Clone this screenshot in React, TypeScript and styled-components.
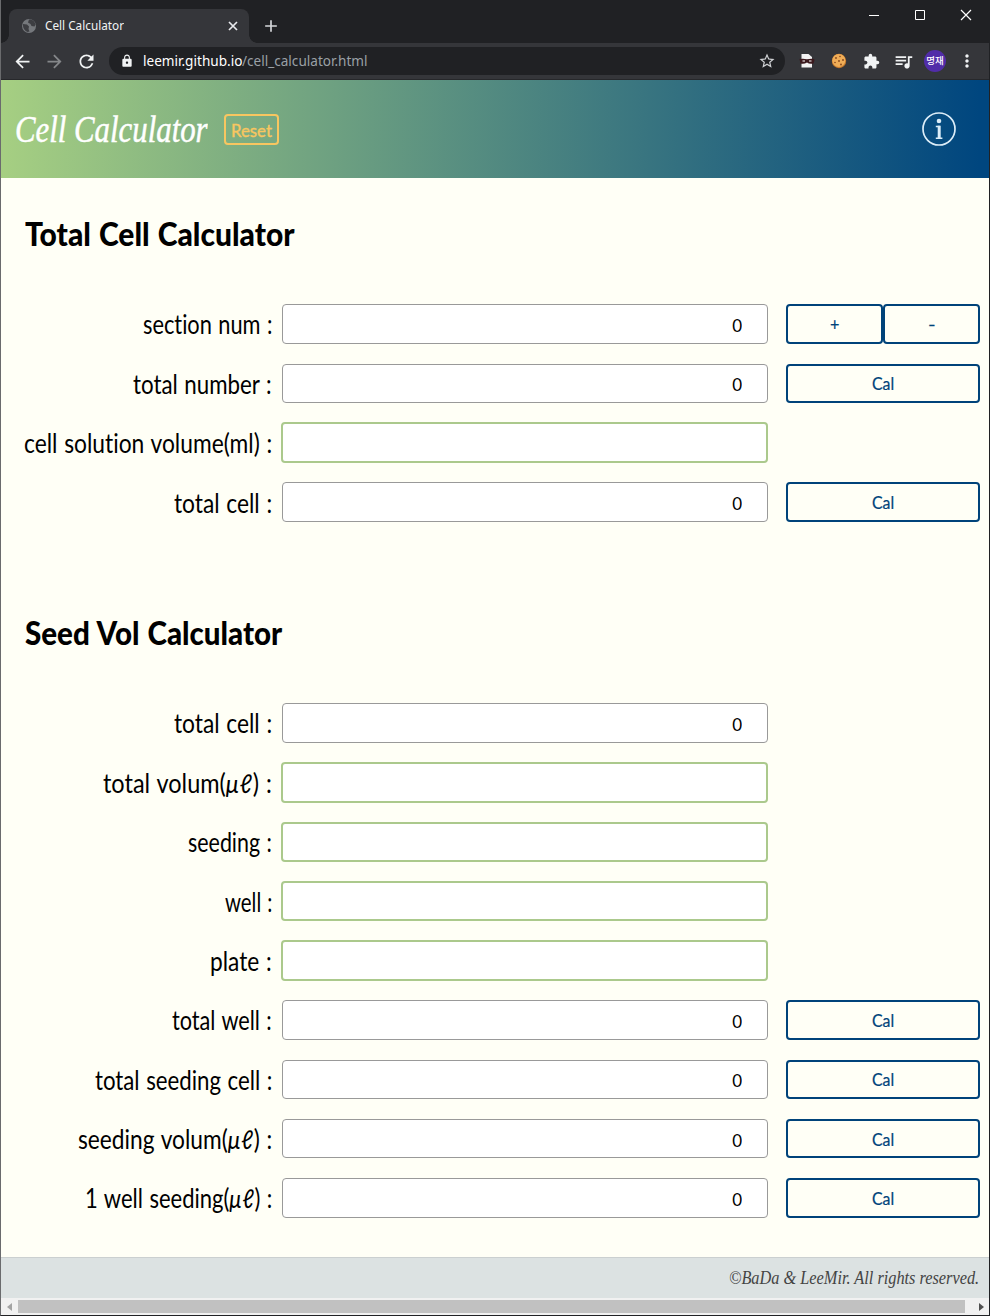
import React, { useLayoutEffect, useRef, useState } from 'react';
import styled, { createGlobalStyle } from 'styled-components';
import {
  MdArrowBack, MdArrowForward, MdRefresh, MdLock, MdStarBorder,
  MdExtension, MdQueueMusic, MdMoreVert, MdAdd,
} from 'react-icons/md';

const GlobalStyle = createGlobalStyle`
  * { box-sizing: border-box; }
  body { margin: 0; background: #202124; }
`;

const hand = `Lato, "Noto Sans", sans-serif`;

/* Scales a single line of text horizontally so that it occupies a set width. */
const FitBox = styled.span<{ $w: number }>`
  display: flex;
  flex: none;
  width: ${p => p.$w}px;
  white-space: pre;
`;
const FitInner = styled.span`
  flex: none;
  transform-origin: left center;
  font-variant-ligatures: none;
`;
function Fit({ w, children }: { w: number; children: React.ReactNode }) {
  const ref = useRef<HTMLSpanElement>(null);
  const [s, setS] = useState(1);
  useLayoutEffect(() => {
    if (ref.current) setS(w / ref.current.offsetWidth);
  }, [w]);
  return (
    <FitBox $w={w}>
      <FitInner ref={ref} style={{ transform: `scaleX(${s})` }}>{children}</FitInner>
    </FitBox>
  );
}

const Window = styled.div`
  width: 990px;
  height: 1316px;
  display: flex;
  flex-direction: column;
  overflow: hidden;
  border: solid #202124;
  border-width: 0 1px 1px 1px;
  border-left-color: #6a6b6d;
`;
const TabStrip = styled.div`
  height: 43px;
  flex: none;
  display: flex;
  align-items: flex-end;
  background: #202124;
  color: #e8eaed;
`;
const Flare = styled.div<{ $side: 'left' | 'right' }>`
  width: 8px;
  height: 8px;
  background: radial-gradient(circle at ${p => p.$side} top, transparent 7.500px, #35363a 8px);
  background-position: 0 0;
`;
const Tab = styled.div`
  width: 240px;
  height: 34px;
  display: flex;
  align-items: center;
  padding: 0 10px 0 12px;
  border-radius: 8px 8px 0 0;
  background: #35363a;
  font: 12.500px "Noto Sans", sans-serif;
  svg:last-child { margin-left: auto; }
`;
const TabTitle = styled.div`
  margin: -2px 0 0 8px;
  color: #f1f3f4;
`;
const NewTab = styled.div`
  display: flex;
  align-items: center;
  height: 34px;
  margin-left: 4px;
  color: #d5d7da;
`;
const WindowControls = styled.div`
  display: flex;
  gap: 34px;
  margin: 0 17px 22px auto;
`;
const Toolbar = styled.div`
  height: 37px;
  flex: none;
  display: flex;
  align-items: center;
  background: #35363a;
  border-bottom: 1px solid #27282b;
  padding-left: 11px;
  color: #f1f3f4;
`;
const NavIcons = styled.div`
  display: flex;
  gap: 11px;
  width: 97px;
  flex: none;
`;
const Address = styled.div`
  width: 676px;
  height: 28px;
  flex: none;
  display: flex;
  align-items: center;
  padding: 0 9px 0 11px;
  border-radius: 14px;
  background: #202124;
  font: 14px "Noto Sans", sans-serif;
  svg:last-child { margin-left: auto; color: #d0d2d5; }
`;
const Url = styled.div`
  display: flex;
  margin: -2px 0 0 9px;
  color: #fff;
`;
const UrlPath = styled.span`
  color: #9aa0a6;
`;
const Extensions = styled.div`
  display: grid;
  grid-template-columns: repeat(6, 32px);
  align-items: center;
  justify-items: center;
  margin-left: 6px;
`;
const Avatar = styled.div`
  width: 22px;
  height: 22px;
  border-radius: 50%;
  background: #512da8;
  color: #fff;
  font: 500 9.500px/21px "Noto Sans CJK KR", sans-serif;
  text-align: center;
`;

const Header = styled.header`
  height: 98px;
  flex: none;
  display: flex;
  align-items: center;
  padding: 0 33px 0 14px;
  background: linear-gradient(to right, #a6cf82, #00467f 99%);
`;
const Logo = styled.h1`
  margin: 0;
  color: #fff;
  font: italic 38px "Liberation Serif", serif;
  -webkit-text-stroke: 0.500px #fff;
`;
const Reset = styled.button`
  width: 55px;
  height: 31px;
  display: flex;
  align-items: center;
  justify-content: center;
  margin: 0 auto 0 16px;
  padding: 2px 0 0;
  border: 2px solid #f8c660;
  border-radius: 4px;
  background: none;
  color: #f8c660;
  font: 18px ${hand};
  -webkit-text-stroke: 0.400px #f8c660;
`;

const Main = styled.main`
  height: 1079px;
  flex: none;
  background: #fffff6;
  color: #000;
`;
const Section = styled.section<{ $h: number }>`
  height: ${p => p.$h}px;
  padding-top: 35px;
`;
const Title = styled.h2`
  height: 40px;
  margin: 0 0 41.200px;
  padding-left: 24px;
  font: 900 33px/40px ${hand};
  word-spacing: 1px;
`;
const Row = styled.div`
  height: 59.375px;
  display: grid;
  grid-template-columns: 271px 10px 486px 18px 194px;
  align-items: center;
`;
const Label = styled.label`
  display: flex;
  justify-content: flex-end;
  padding-top: 1px;
  font: 26px/34px ${hand};
  word-spacing: 1px;
`;
const Field = styled.input<{ $editable: boolean }>`
  grid-column: 3;
  width: ${p => (p.$editable ? 487 : 486)}px;
  height: ${p => (p.$editable ? 40.4 : 39.375)}px;
  margin: 0 0 0 ${p => (p.$editable ? -1 : 0)}px;
  padding: 3px 25px 0 0;
  border: ${p => (p.$editable ? '2px solid #abc98c' : '1px solid #999')};
  border-radius: 4px;
  outline: 0;
  background: #fff;
  color: #000;
  font: 17px ${hand};
  text-align: right;
`;
const Actions = styled.div`
  grid-column: 5;
  display: flex;
`;
const Action = styled.button`
  flex: 1;
  height: 39.375px;
  display: flex;
  align-items: center;
  justify-content: center;
  padding: 0;
  border: 2px solid #00437a;
  border-radius: 4px;
  background: #fffff6;
  color: #00437a;
  font: 18px ${hand};
  -webkit-text-stroke: 0.200px #00437a;
`;

const Footer = styled.footer`
  height: 41px;
  flex: none;
  display: flex;
  align-items: center;
  justify-content: flex-end;
  padding-right: 10px;
  border-top: 1px solid #cbd0d0;
  background: #dce2e2;
  color: #444;
  font: italic 18px "Liberation Serif", serif;
`;
const ScrollBar = styled.div`
  height: 17px;
  flex: none;
  display: flex;
  align-items: center;
  justify-content: space-between;
  padding: 0 5px 0 6px;
  background: #f1f1f1;
`;
const Thumb = styled.div`
  width: 947px;
  height: 13px;
  margin: 0 auto 0 6px;
  background: #c1c1c1;
`;

type RowData = { label: string; w: number; value?: string; actions?: string[] };
const total: RowData[] = [
  { label: 'section num :', w: 129, value: '0', actions: ['+', '-'] },
  { label: 'total number :', w: 139, value: '0', actions: ['Cal'] },
  { label: 'cell solution volume(ml) :', w: 248 },
  { label: 'total cell :', w: 98, value: '0', actions: ['Cal'] },
];
const seed: RowData[] = [
  { label: 'total cell :', w: 98, value: '0' },
  { label: 'total volum(μℓ) :', w: 169 },
  { label: 'seeding :', w: 84 },
  { label: 'well :', w: 47 },
  { label: 'plate :', w: 62 },
  { label: 'total well :', w: 100, value: '0', actions: ['Cal'] },
  { label: 'total seeding cell :', w: 177, value: '0', actions: ['Cal'] },
  { label: 'seeding volum(μℓ) :', w: 194, value: '0', actions: ['Cal'] },
  { label: '1 well seeding(μℓ) :', w: 187, value: '0', actions: ['Cal'] },
];
const actionWidth: Record<string, number> = { '+': 9, '-': 8, Cal: 22 };

const Unit = styled.i`
  letter-spacing: 1px;
`;

function Rows({ rows }: { rows: RowData[] }) {
  return (
    <>
      {rows.map(r => {
        const [before, after] = r.label.split('μℓ');
        return (
          <Row key={r.label}>
            <Label>
              <Fit w={r.w}>{before}{after && <><Unit>μℓ</Unit>{after}</>}</Fit>
            </Label>
            <Field $editable={!r.value} defaultValue={r.value} />
            {r.actions && (
              <Actions>
                {r.actions.map(a => <Action key={a}><Fit w={actionWidth[a]}>{a}</Fit></Action>)}
              </Actions>
            )}
          </Row>
        );
      })}
    </>
  );
}

export default function App() {
  return (
    <Window>
      <GlobalStyle />
      <TabStrip>
        <Flare $side="left" />
        <Tab>
          <svg width="16" height="16" viewBox="0 0 16 16">
            <circle cx="8" cy="8" r="7" fill="#75787c" />
            <path d="M2 6l4 .5 2 2-.5 2.500 1 2.500-2 .5q-4-2-4.500-6zM8 1.500l-1 3 2.500 1.500 1 2 3 .5 1-2q-1-4-4.500-5z" fill="#3d3e42" />
          </svg>
          <TabTitle><Fit w={79}>Cell Calculator</Fit></TabTitle>
          <svg width="12" height="12"><path d="M2 2l8 8M10 2l-8 8" stroke="#e8eaed" strokeWidth="1.700" /></svg>
        </Tab>
        <Flare $side="right" />
        <NewTab><MdAdd size={20} /></NewTab>
        <WindowControls>
          <svg width="12" height="12"><path d="M1 6.500h10" stroke="#fff" /></svg>
          <svg width="12" height="12"><path d="M1.500 1.500h9v9h-9z" stroke="#fff" fill="none" /></svg>
          <svg width="12" height="12"><path d="M1 1l10 10M11 1L1 11" stroke="#fff" strokeWidth="1.200" /></svg>
        </WindowControls>
      </TabStrip>
      <Toolbar>
        <NavIcons>
          <MdArrowBack size={21} />
          <MdArrowForward size={21} color="#85878a" />
          <MdRefresh size={21} />
        </NavIcons>
        <Address>
          <MdLock size={14} />
          <Url><Fit w={99}>leemir.github.io</Fit><UrlPath><Fit w={126}>/cell_calculator.html</Fit></UrlPath></Url>
          <MdStarBorder size={18} />
        </Address>
        <Extensions>
          <svg width="16" height="16" viewBox="0 0 16 16">
            <path d="M2.500 1h7l3.500 3v10.500H2.500z" fill="#f3f3f3" />
            <path d="M.5 6q4-.8 7.500.3Q12 5.200 15 6l.5 1-1 3.500q-4 1-6.500-1-3 2-6.500 1z" fill="#3b191d" />
            <path d="M3.500 8h2.500m4 0h2.500" stroke="#fff" strokeWidth="1.200" />
          </svg>
          <svg width="16" height="16" viewBox="0 0 16 16">
            <circle cx="8" cy="8" r="7.200" fill="#c97b2c" />
            <circle cx="7.800" cy="7.400" r="6.500" fill="#efad57" />
            <g fill="#85451b">
              <circle cx="5" cy="5" r=".9" /><circle cx="9" cy="3.500" r=".8" /><circle cx="12" cy="7" r=".9" />
              <circle cx="8" cy="8" r=".9" /><circle cx="4" cy="9.500" r=".8" /><circle cx="10" cy="11.500" r=".9" />
            </g>
          </svg>
          <MdExtension size={17} />
          <MdQueueMusic size={21} />
          <Avatar>명재</Avatar>
          <MdMoreVert size={20} />
        </Extensions>
      </Toolbar>
      <Header>
        <Logo><Fit w={193}>Cell Calculator</Fit></Logo>
        <Reset><Fit w={41}>Reset</Fit></Reset>
        <svg width="34" height="34" viewBox="0 0 34 34" fill="none" stroke="#dcedf8">
          <circle cx="17" cy="17" r="16" strokeWidth="1.700" />
          <circle cx="17" cy="9" r="2.300" fill="#dcedf8" stroke="none" />
          <path d="M13.800 14.400h4M13.800 26.300h6.600" strokeWidth="1.500" />
          <path d="M17.200 13.700v12.600" strokeWidth="3" />
        </svg>
      </Header>
      <Main>
        <Section $h={399.1}>
          <Title><Fit w={270}>Total Cell Calculator</Fit></Title>
          <Rows rows={total} />
        </Section>
        <Section $h={679.9}>
          <Title><Fit w={257}>Seed Vol Calculator</Fit></Title>
          <Rows rows={seed} />
        </Section>
      </Main>
      <Footer><Fit w={250}>©BaDa &amp; LeeMir. All rights reserved.</Fit></Footer>
      <ScrollBar>
        <svg width="5" height="8"><path d="M5 0v8L0 4z" fill="#a3a3a3" /></svg>
        <Thumb />
        <svg width="5" height="8"><path d="M0 0v8l5-4z" fill="#505050" /></svg>
      </ScrollBar>
    </Window>
  );
}
